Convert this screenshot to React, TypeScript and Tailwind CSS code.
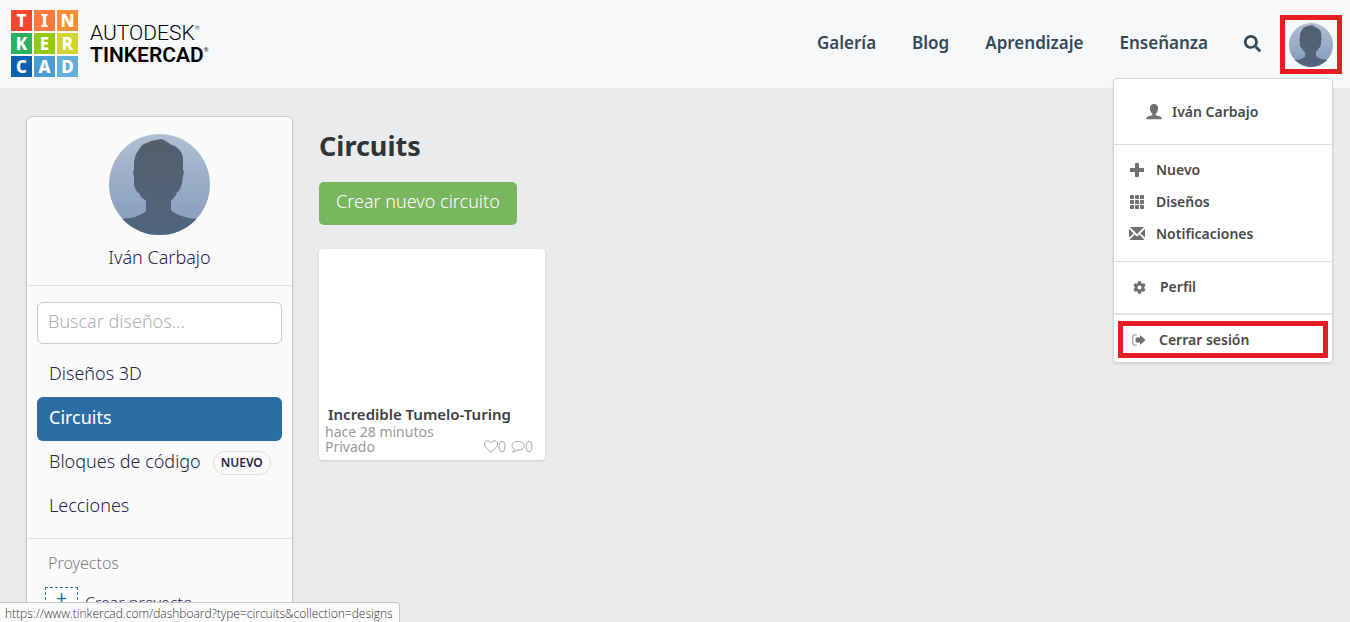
import React from "react";
import { FaSearch, FaCog } from "react-icons/fa";

const tiles = [
  { letter: "T", color: "bg-[#f4472f]" },
  { letter: "I", color: "bg-[#ff7940]" },
  { letter: "N", color: "bg-[#f88f38]" },
  { letter: "K", color: "bg-[#2bb062]" },
  { letter: "E", color: "bg-[#93c90e]" },
  { letter: "R", color: "bg-[#d3d334]" },
  { letter: "C", color: "bg-[#0b60ae]" },
  { letter: "A", color: "bg-[#4b9bd3]" },
  { letter: "D", color: "bg-[#63afdc]" },
];

function Logo() {
  return (
    <a href="#" className="flex items-center gap-3 pb-[2px]" aria-label="Autodesk Tinkercad">
      <span className="grid grid-cols-3 gap-[2px]">
        {tiles.map((t) => (
          <span
            key={t.letter}
            className={`flex h-[21px] w-[21px] items-center justify-center font-['Noto_Sans'] text-[17px] leading-none font-extrabold text-white ${t.color}`}
          >
            {t.letter}
          </span>
        ))}
      </span>
      <span className="flex flex-col pt-[2px] font-['Roboto'] text-[21px] leading-[22px] text-black">
        <span className="flex font-light">
          AUTODESK<span className="text-[6px] leading-[12px]">®</span>
        </span>
        <span className="flex font-semibold">
          TINKERCAD<span className="text-[6px] leading-[12px] font-normal">®</span>
        </span>
      </span>
    </a>
  );
}

function Avatar({ id, className }: { id: string; className: string }) {
  return (
    <svg viewBox="0 0 101 101" className={className} role="img" aria-label="Iván Carbajo">
      <defs>
        <linearGradient id={`${id}-bg`} x1="0" y1="0" x2="0" y2="1">
          <stop offset="0" stopColor="#b0bfd2" />
          <stop offset="1" stopColor="#8399bb" />
        </linearGradient>
        <linearGradient id={`${id}-fg`} x1="0" y1="0" x2="0" y2="1">
          <stop offset="0" stopColor="#555f6c" />
          <stop offset="1" stopColor="#50657f" />
        </linearGradient>
        <clipPath id={`${id}-clip`}>
          <circle cx="50.5" cy="50.5" r="50.5" />
        </clipPath>
      </defs>
      <g clipPath={`url(#${id}-clip)`}>
        <rect width="101" height="101" fill={`url(#${id}-bg)`} />
        <path
          fill={`url(#${id}-fg)`}
          d="M52 5 L42 7 L33 11 L27 20 L25 27 L25 36 L24 38 L25 43 L25 52 L28 58 L30 59 L32 63 L37 67 L37 77 C33 81 25 84 17 84.500 L10 85 L8 101 L93 101 L91 85 L83 84.500 C75 83 67 81 62 76 L62 67 L67 61 L68 58 L70 57 L73 50 L74 42 L75 38 L74 36 L74 24 C73 16 67 12 63 11 L55 6 Z"
        />
      </g>
    </svg>
  );
}

function UserIcon() {
  return (
    <svg viewBox="0 0 16 16" className="h-4 w-4 fill-[#707070]" aria-hidden="true">
      <path d="M8 0C5.300 0 3.900 1.700 3.900 4.500 3.900 6.500 4.900 8.600 6.300 9.700V11C6 11.900 1.600 12 .7 13.300 .3 14 .2 14.400.2 15.200H15.800C15.800 14.400 15.700 14 15.300 13.300 14.400 12 10 11.900 9.700 11V9.700C11.100 8.600 12.100 6.500 12.100 4.500 12.100 1.700 10.700 0 8 0Z" />
    </svg>
  );
}

function PlusIcon() {
  return (
    <svg viewBox="0 0 14 14" className="h-[14px] w-[14px] fill-[#707070]" aria-hidden="true">
      <path d="M5.500 0H8.500Q9 0 9 .5V5H13.500Q14 5 14 5.500V8.500Q14 9 13.500 9H9V13.500Q9 14 8.500 14H5.500Q5 14 5 13.500V9H.5Q0 9 0 8.500V5.500Q0 5 .5 5H5V.5Q5 0 5.500 0Z" />
    </svg>
  );
}

function GridIcon() {
  return (
    <svg viewBox="0 0 14 14" className="h-[14px] w-[14px] fill-[#707070]" aria-hidden="true">
      {[0, 5, 10].map((y) => [0, 5, 10].map((x) => <rect key={`${x}-${y}`} x={x} y={y} width="4" height="4" rx="0.8" />))}
    </svg>
  );
}

function MailIcon() {
  return (
    <svg viewBox="0 0 16 13" className="h-[13px] w-4 shrink-0 fill-[#707070]" aria-hidden="true">
      <path d="M.8 0H15.200L8 7ZM0 1.800 4.600 6.400 0 10.600ZM16 1.800V10.600L11.400 6.400ZM5.700 7.500 8 9.700 10.300 7.500 15.600 13H.4Z" />
    </svg>
  );
}

function SignOutIcon() {
  return (
    <svg viewBox="0 0 14 12" className="h-3 w-[14px] fill-[#707070]" aria-hidden="true">
      <path d="M5 0.500H2.500C1.200.500.500 1.200.500 2.500V9.500C.500 10.800 1.200 11.500 2.500 11.500H5V10.700H2.700C1.800 10.700 1.300 10.200 1.300 9.400V2.600C1.300 1.800 1.800 1.300 2.700 1.300H5ZM8 1 13.500 6 8 11V8.400H3.600V3.600H8Z" />
    </svg>
  );
}

function HeartIcon() {
  return (
    <svg viewBox="0 0 14 13" className="h-[13px] w-[14px] fill-none stroke-[#a6a6a6]" aria-hidden="true">
      <path d="M7 12.300 1.600 7C-.4 4.700.5 1 3.700.900 5.300.900 6.300 1.900 7 3 7.700 1.900 8.700.900 10.300.900 13.500 1 14.400 4.700 12.400 7Z" />
    </svg>
  );
}

function CommentIcon() {
  return (
    <svg viewBox="0 0 14 13" className="h-[13px] w-[14px] fill-none stroke-[#a6a6a6]" aria-hidden="true">
      <path d="M7.200 1.500C3.700 1.500 1 3.300 1 5.800 1 7.300 2 8.600 3.500 9.300 3.300 10.500 2.500 11.400 1.500 12.200 3.400 12 4.900 11.200 5.900 10.100 10 10.400 13.400 8.500 13.400 5.800 13.400 3.300 10.700 1.500 7.200 1.500Z" />
    </svg>
  );
}

function MenuRow({ icon, label }: { icon: React.ReactNode; label: string }) {
  return (
    <a href="#" className="flex h-8 items-center gap-3 px-4">
      <span className="flex w-[14px] items-center justify-center">{icon}</span>
      {label}
    </a>
  );
}

function UserMenu() {
  return (
    <div className="absolute top-[63px] right-[9px] z-10 w-[220px] rounded border border-[#d3d6d9] bg-white text-[14px] leading-5 font-semibold text-[#4a4a4a] shadow-sm">
      <a href="#" className="flex h-[66px] items-center gap-[10px] border-b border-[#dcdfe2] pt-[2px] pl-8">
        <UserIcon />
        Iván Carbajo
      </a>
      <div className="border-b border-[#dcdfe2] pt-[9px] pb-[11px]">
        <MenuRow icon={<PlusIcon />} label="Nuevo" />
        <MenuRow icon={<GridIcon />} label="Diseños" />
        <MenuRow icon={<MailIcon />} label="Notificaciones" />
      </div>
      <a href="#" className="flex h-[53px] items-center gap-[14px] border-b-2 border-[#e2e4e6] pl-[19px]">
        <FaCog className="h-[13px] w-[13px] text-[#707070]" />
        Perfil
      </a>
      <div className="px-1 pt-[6px] pb-1">
        <a href="#" className="flex h-[37px] items-center gap-[13px] border-[5px] border-[#e91c24] pt-[2px] pl-[9px]">
          <SignOutIcon />
          Cerrar sesión
        </a>
      </div>
    </div>
  );
}

function Header() {
  return (
    <header className="flex h-[88px] items-center justify-between bg-[#f7f8fa] pr-2 pl-[11px]">
      <Logo />
      <div className="flex items-center">
        <nav className="flex items-center gap-9 pb-[2px] text-[17px] leading-6 font-semibold text-[#34495a]">
          <a href="#">Galería</a>
          <a href="#">Blog</a>
          <a href="#">Aprendizaje</a>
          <a href="#">Enseñanza</a>
          <button type="button" aria-label="Buscar">
            <FaSearch className="h-[17px] w-[17px]" />
          </button>
        </nav>
        <div className="relative ml-[19px]">
          <button type="button" className="block h-[59px] w-[62px] border-[5px] border-[#e91c24] pt-[2px] pl-1" aria-label="Cuenta">
            <Avatar id="small" className="h-11 w-11" />
          </button>
          <div className="absolute top-0 -right-2">
            <div className="relative mr-2">
              <UserMenu />
            </div>
          </div>
        </div>
      </div>
    </header>
  );
}

function Sidebar() {
  const item = "flex h-11 items-center whitespace-nowrap rounded-md px-3 pb-1";
  return (
    <aside className="w-[267px] shrink-0 rounded-md border border-[#c6cbd0] bg-[#fafafb] text-[18px] font-light text-[#26264a] shadow-sm">
      <div className="flex flex-col items-center border-b border-[#dcdfe2] pt-[17px] pb-[14px]">
        <Avatar id="large" className="h-[101px] w-[101px]" />
        <span className="mt-2 leading-7">Iván Carbajo</span>
      </div>
      <div className="border-b border-[#dcdfe2] px-[10px] pt-4 pb-[9px]">
        <input
          type="search"
          aria-label="Buscar diseños"
          placeholder="Buscar diseños..."
          className="mb-[9px] block h-[42px] w-full rounded-md border border-[#c6c9cf] bg-white px-[10px] pb-1 placeholder:text-[#adb0b8]"
        />
        <nav>
          <a href="#" className={item}>Diseños 3D</a>
          <a href="#" className={`${item} bg-[#2e6da4] font-normal text-white`}>Circuits</a>
          <a href="#" className={item}>
            Bloques de código
            <span className="mt-1 ml-3 rounded-full border border-[#dcdfe2] px-[7px] text-[12px] leading-[22px] font-semibold">NUEVO</span>
          </a>
          <a href="#" className={item}>Lecciones</a>
        </nav>
      </div>
      <div className="px-[18px] pt-3 pb-6">
        <h2 className="px-[3px] text-[16px] leading-6 text-[#7d8086]">Proyectos</h2>
        <button type="button" className="mt-3 flex items-start gap-[7px] text-[16px] leading-8">
          <span className="flex h-[33px] w-[33px] items-start justify-center border border-dashed border-[#2e6da4] bg-white text-[20px] leading-5 font-normal text-[#2e6da4]">
            +
          </span>
          Crear proyecto
        </button>
      </div>
    </aside>
  );
}

function DesignCard() {
  return (
    <article className="mt-6 flex h-[211px] w-[226px] flex-col justify-end rounded-sm bg-white px-[6px] pb-[6px] text-[14px] leading-[15px] text-[#9a9a9a] shadow-sm">
      <h2 className="px-[3px] text-[15px] leading-5 font-semibold text-[#404040]">Incredible Tumelo-Turing</h2>
      <p>hace 28 minutos</p>
      <div className="flex items-start justify-between pr-[6px]">
        <span>Privado</span>
        <span className="flex items-center gap-[5px] font-light">
          <span className="flex items-center"><HeartIcon />0</span>
          <span className="flex items-center"><CommentIcon />0</span>
        </span>
      </div>
    </article>
  );
}

export default function App() {
  return (
    <div className="h-screen overflow-hidden bg-[#e9ebed] font-['Noto_Sans',sans-serif]">
      <Header />
      <div className="flex items-start gap-[26px] px-[26px] pt-7">
        <Sidebar />
        <main className="min-w-0 flex-1 pt-3">
          <h1 className="text-[27px] leading-9 font-bold text-[#2f3437]">Circuits</h1>
          <button type="button" className="mt-[18px] block h-[43px] rounded-[5px] bg-[#7ab55f] px-[17px] pb-1 text-[18px] font-light text-white">
            Crear nuevo circuito
          </button>
          <DesignCard />
        </main>
      </div>
      <div className="fixed bottom-0 left-0 z-20 rounded-tr border border-b-0 border-l-0 border-[#c3c5c8] bg-[#fbfbfb] pt-[2px] pr-[6px] pl-[5px] font-['Open_Sans'] text-[12px] leading-[17px] font-light text-[#333]">
        https://www.tinkercad.com/dashboard?type=circuits&amp;collection=designs
      </div>
    </div>
  );
}
